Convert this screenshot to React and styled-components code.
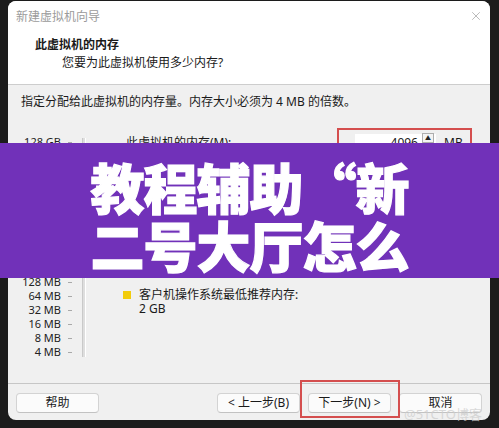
import React from "react";
import styled, { createGlobalStyle } from "styled-components";
import { X } from "lucide-react";

const GlobalStyle = createGlobalStyle`
  html, body {
    margin: 0;
    padding: 0;
    background: #1c1c1c;
  }
  body {
    font-family: "Noto Sans", "Noto Sans CJK SC", sans-serif;
  }
`;

const Page = styled.div`
  position: relative;
  width: 499px;
  height: 428px;
  overflow: hidden;
  background: #1c1c1c;
  padding-top: 1px;
  box-sizing: border-box;
`;

const Window = styled.div`
  margin-left: 8px;
  width: 482px;
  height: 419px;
  border-radius: 8px;
  overflow: hidden;
  background: #f0f0f0;
  display: flex;
  flex-direction: column;
  font-size: 12px;
  color: #1a1a1a;
`;

const TitleBar = styled.div`
  height: 29px;
  flex: none;
  background: #fff;
  display: flex;
  align-items: center;
  justify-content: space-between;
  padding: 0 8px;
  color: #9b9b9b;
  font-size: 12px;
`;

const CloseButton = styled.span`
  display: flex;
  color: #8a8a8a;
  margin-right: -1px;
`;

const Header = styled.div`
  height: 55px;
  flex: none;
  box-sizing: border-box;
  background: #fff;
  border-bottom: 1px solid #cdcdcd;
  padding-top: 6px;
  line-height: 18px;
`;

const HeaderTitle = styled.div`
  font-weight: 700;
  padding-left: 27px;
`;

const HeaderSub = styled.div`
  padding-left: 54px;
`;

const Body = styled.div`
  flex: 1;
  padding: 8px 18px 0 13px;
  line-height: 18px;
`;

const MainRow = styled.div`
  margin-top: 17px;
  display: flex;
`;

const Scale = styled.div`
  display: flex;
  padding-top: 7px;
`;

const ScaleLabels = styled.div`
  width: 40px;
  display: flex;
  flex-direction: column;
  align-items: flex-end;
  font-size: 11px;
  color: #222;
`;

const ScaleLabel = styled.div`
  height: 14px;
  line-height: 14px;
  white-space: nowrap;
`;

const ScaleTicks = styled.div`
  width: 14px;
  display: flex;
  flex-direction: column;
  align-items: center;
  margin-left: 2px;
`;

const Tick = styled.div`
  height: 14px;
  display: flex;
  align-items: center;
  &::before {
    content: "";
    width: 4px;
    height: 1px;
    background: #a9a9a9;
  }
`;

const Track = styled.div`
  width: 2px;
  margin: 3px 0 0 5px;
  height: 219px;
  border-left: 1px solid #c9c9c9;
  border-right: 1px solid #fff;
  background: #dedede;
`;

const Content = styled.div`
  flex: 1;
  padding-left: 40px;
  display: flex;
  flex-direction: column;
`;

const MemoryRow = styled.div`
  height: 30px;
  display: flex;
  align-items: center;
`;

const Highlight = styled.div`
  margin-left: auto;
  width: 135px;
  height: 30px;
  box-sizing: border-box;
  border: 2px solid #d44e4e;
  display: flex;
  align-items: center;
  padding-left: 16px;
`;

const NumberField = styled.div`
  width: 81px;
  height: 19px;
  box-sizing: border-box;
  background: #fff;
  display: flex;
  align-items: center;
  justify-content: flex-end;
  padding-right: 2px;
  gap: 4px;
`;

const Spinner = styled.div`
  display: flex;
  flex-direction: column;
  width: 12px;
`;

const SpinButton = styled.div`
  height: 8px;
  border: 1px solid #adadad;
  background: #f3f3f3;
  display: flex;
  align-items: center;
  justify-content: center;
  font-size: 6px;
  line-height: 6px;
  color: #222;
`;

const Unit = styled.span`
  margin-left: 8px;
`;

const Notes = styled.div`
  margin-top: 130px;
  display: flex;
  flex-direction: column;
  gap: 14px;
  line-height: 14px;
`;

const Note = styled.div`
  display: flex;
  gap: 8px;
  margin-left: -3px;
`;

const Swatch = styled.span`
  flex: none;
  width: 8px;
  height: 8px;
  margin-top: 3px;
  background: ${(p) => p.$color};
`;

const Footer = styled.div`
  flex: none;
  border-top: 1px solid #c6c6c6;
  padding: 9px 8px 7px;
  display: flex;
  align-items: center;
`;

const Button = styled.button`
  width: 83px;
  height: 20px;
  box-sizing: border-box;
  border: 1px solid #d3d3d3;
  border-bottom-color: #c2c2c2;
  border-radius: 4px;
  background: #fbfbfb;
  font: inherit;
  font-size: 12px;
  color: #1a1a1a;
  padding: 0;
  line-height: 18px;
`;

const ButtonGroup = styled.div`
  margin-left: auto;
  display: flex;
  gap: 8px;
`;

const Marked = styled.div`
  position: relative;
  display: flex;
  &::after {
    content: "";
    position: absolute;
    top: -13px;
    left: -8px;
    right: -9px;
    bottom: -5px;
    border: 2px solid #d44e4e;
    pointer-events: none;
  }
`;

const Banner = styled.div`
  position: absolute;
  left: 0;
  top: 143px;
  width: 499px;
  height: 135px;
  box-sizing: border-box;
  background: #7131b9;
  padding-top: 15px;
  color: #fff;
  text-align: center;
  font-family: "Noto Sans CJK SC", sans-serif;
  font-weight: 900;
  font-size: 54px;
  line-height: 58px;
  letter-spacing: -1px;
  -webkit-text-stroke: 1.2px #fff;
`;

const Watermark = styled.div`
  position: absolute;
  left: 404px;
  top: 404px;
  font-size: 13px;
  color: rgba(205, 205, 205, 0.75);
  white-space: nowrap;
`;

const scale = [
  "128 GB", "64 GB", "32 GB", "16 GB", "8 GB", "4 GB", "2 GB", "1 GB",
  "512 MB", "256 MB", "128 MB", "64 MB", "32 MB", "16 MB", "8 MB", "4 MB",
];

const App = () => {
  return (
    <>
      <GlobalStyle />
      <Page>
        <Window>
          <TitleBar>
            <span>新建虚拟机向导</span>
            <CloseButton>
              <X size={14} strokeWidth={1} />
            </CloseButton>
          </TitleBar>
          <Header>
            <HeaderTitle>此虚拟机的内存</HeaderTitle>
            <HeaderSub>您要为此虚拟机使用多少内存?</HeaderSub>
          </Header>
          <Body>
            <div>指定分配给此虚拟机的内存量。内存大小必须为 4 MB 的倍数。</div>
            <MainRow>
              <Scale>
                <ScaleLabels>
                  {scale.map((s) => (
                    <ScaleLabel key={s}>{s}</ScaleLabel>
                  ))}
                </ScaleLabels>
                <ScaleTicks>
                  {scale.map((s) => (
                    <Tick key={s} />
                  ))}
                </ScaleTicks>
                <Track />
              </Scale>
              <Content>
                <MemoryRow>
                  <span>此虚拟机的内存(M):</span>
                  <Highlight>
                    <NumberField>
                      <span>4096</span>
                      <Spinner>
                        <SpinButton>▲</SpinButton>
                        <SpinButton>▼</SpinButton>
                      </Spinner>
                    </NumberField>
                    <Unit>MB</Unit>
                  </Highlight>
                </MemoryRow>
                <Notes>
                  <Note>
                    <Swatch $color="#f2cc0c" />
                    <div>
                      客户机操作系统最低推荐内存:
                      <br />
                      2 GB
                    </div>
                  </Note>
                </Notes>
              </Content>
            </MainRow>
          </Body>
          <Footer>
            <Button>帮助</Button>
            <ButtonGroup>
              <Button>&lt; 上一步(B)</Button>
              <Marked>
                <Button>下一步(N) &gt;</Button>
              </Marked>
              <Button>取消</Button>
            </ButtonGroup>
          </Footer>
        </Window>
        <Banner>
          <div>教程辅助“新</div>
          <div>二号大厅怎么</div>
        </Banner>
        <Watermark>@51CTO博客</Watermark>
      </Page>
    </>
  );
};

export default App;
